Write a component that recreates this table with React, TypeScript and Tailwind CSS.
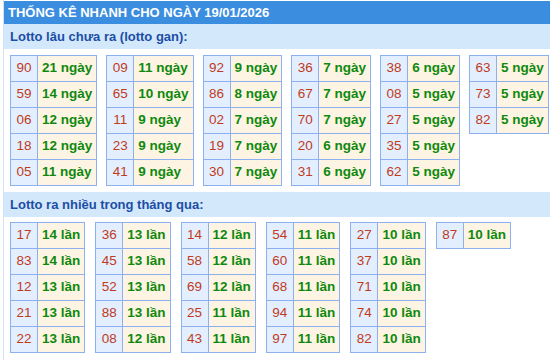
import React from "react";

type Row = [string, string];

const gan: Row[][] = [
  [["90", "21 ngày"], ["59", "14 ngày"], ["06", "12 ngày"], ["18", "12 ngày"], ["05", "11 ngày"]],
  [["09", "11 ngày"], ["65", "10 ngày"], ["11", "9 ngày"], ["23", "9 ngày"], ["41", "9 ngày"]],
  [["92", "9 ngày"], ["86", "8 ngày"], ["02", "7 ngày"], ["19", "7 ngày"], ["30", "7 ngày"]],
  [["36", "7 ngày"], ["67", "7 ngày"], ["70", "7 ngày"], ["20", "6 ngày"], ["31", "6 ngày"]],
  [["38", "6 ngày"], ["08", "5 ngày"], ["27", "5 ngày"], ["35", "5 ngày"], ["62", "5 ngày"]],
  [["63", "5 ngày"], ["73", "5 ngày"], ["82", "5 ngày"]],
];

const nhieu: Row[][] = [
  [["17", "14 lần"], ["83", "14 lần"], ["12", "13 lần"], ["21", "13 lần"], ["22", "13 lần"]],
  [["36", "13 lần"], ["45", "13 lần"], ["52", "13 lần"], ["88", "13 lần"], ["08", "12 lần"]],
  [["14", "12 lần"], ["58", "12 lần"], ["69", "12 lần"], ["25", "11 lần"], ["43", "11 lần"]],
  [["54", "11 lần"], ["60", "11 lần"], ["68", "11 lần"], ["94", "11 lần"], ["97", "11 lần"]],
  [["27", "10 lần"], ["37", "10 lần"], ["71", "10 lần"], ["74", "10 lần"], ["82", "10 lần"]],
  [["87", "10 lần"]],
];

function Table({ rows }: { rows: Row[] }) {
  return (
    <div className="shrink-0 whitespace-nowrap grid grid-cols-[27px_auto] border-t border-l border-[#8cb1ee] text-[13.5px]">
      {rows.map(([n, v], i) => (
        <React.Fragment key={i}>
          <div className="h-[26px] flex items-center justify-center bg-[#e3efff] border-r border-b border-[#8cb1ee] text-[#bf3b1c]">
            {n}
          </div>
          <div className="h-[26px] flex items-center justify-start px-[4px] bg-[#fef4e3] border-r border-b border-[#8cb1ee] text-[#0e890e] font-bold">
            {v}
          </div>
        </React.Fragment>
      ))}
    </div>
  );
}

export default function App() {
  return (
    <div
      className="ml-[3px] pt-[1px] border-l border-[#d2e2f4] h-[360px] bg-white text-[13px] overflow-hidden"
      style={{ fontFamily: '"Liberation Sans", Arial, sans-serif' }}
    >
      <div className="h-[23px] bg-[#3b8ddf] text-white font-bold flex items-center pl-[4px] leading-none">
        THỐNG KÊ NHANH CHO NGÀY 19/01/2026
      </div>
      <div className="h-[25px] bg-[#d4e8fb] text-[#1b4ea6] font-bold flex items-center pl-[6px]">
        Lotto lâu chưa ra (lotto gan):
      </div>
      <div className="flex items-start gap-[9px] pl-[6px] pt-[6px]">
        {gan.map((t, i) => (
          <Table key={i} rows={t} />
        ))}
      </div>
      <div className="mt-[6px] h-[25px] bg-[#d4e8fb] text-[#1b4ea6] font-bold flex items-center pl-[6px]">
        Lotto ra nhiều trong tháng qua:
      </div>
      <div className="flex items-start gap-[10px] pl-[6px] pt-[5px]">
        {nhieu.map((t, i) => (
          <Table key={i} rows={t} />
        ))}
      </div>
    </div>
  );
}
